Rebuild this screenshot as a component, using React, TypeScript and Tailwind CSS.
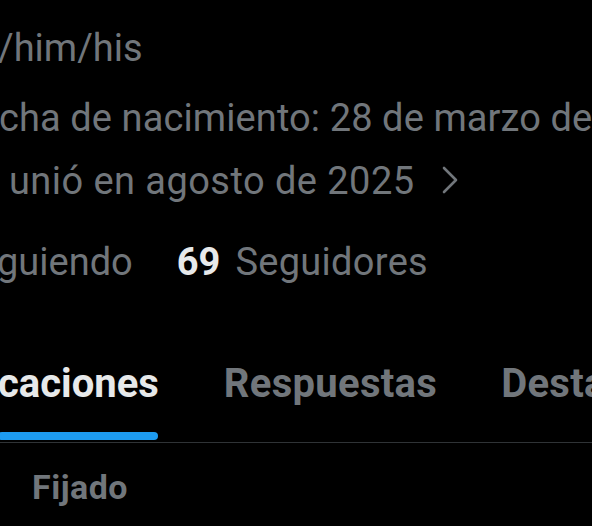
import React from "react";

export default function App() {
  const font = { fontFamily: "Roboto, 'Noto Sans', sans-serif" };
  return (
    <div className="w-[592px] h-[526px] bg-black overflow-hidden relative" style={font}>
      <div className="flex flex-col pt-[15px] text-[38px] leading-[66px] text-[#71767b] whitespace-nowrap">
        <div className="ml-[-2px]">/him/his</div>
        <div className="ml-[-1px] mt-[4px] tracking-[0.1px]">cha de nacimiento: 28 de marzo de 1990</div>
        <div className="flex items-center ml-[-1px] mt-[-3px]">
          <span className="tracking-[0.45px]">&nbsp;unió en agosto de 2025</span>
          <svg width="16" height="28" viewBox="0 0 16 28" className="ml-[27px] mt-[-2px]" fill="none" stroke="#71767b" strokeWidth="2.6" strokeLinecap="round" strokeLinejoin="round">
            <path d="M2 2 L14 14 L2 26" />
          </svg>
        </div>
        <div className="flex mt-[15px] ml-[-3px]">
          <span>guiendo</span>
          <span className="ml-[44px] font-bold text-[#e7e9ea]">69</span>
          <span className="ml-[15px] tracking-[0.3px]">Seguidores</span>
        </div>
      </div>
      <div className="mt-[59px] border-b border-[#2f3336] flex whitespace-nowrap text-[40px] font-bold">
        <div className="relative pb-[28px] ml-[-2px]">
          <span className="text-[#e7e9ea]">caciones</span>
          <div className="absolute left-0 right-[1px] bottom-[2px] h-[8px] bg-[#1d9bf0] rounded-full" />
        </div>
        <span className="ml-[65px] text-[#71767b] tracking-[0.3px]">Respuestas</span>
        <span className="ml-[64px] text-[#71767b] tracking-[0.3px]">Destacados</span>
      </div>
      <div className="pl-[32px] pt-[19px] text-[34px] font-bold text-[#71767b] whitespace-nowrap tracking-[0.5px]">Fijado</div>
    </div>
  );
}
